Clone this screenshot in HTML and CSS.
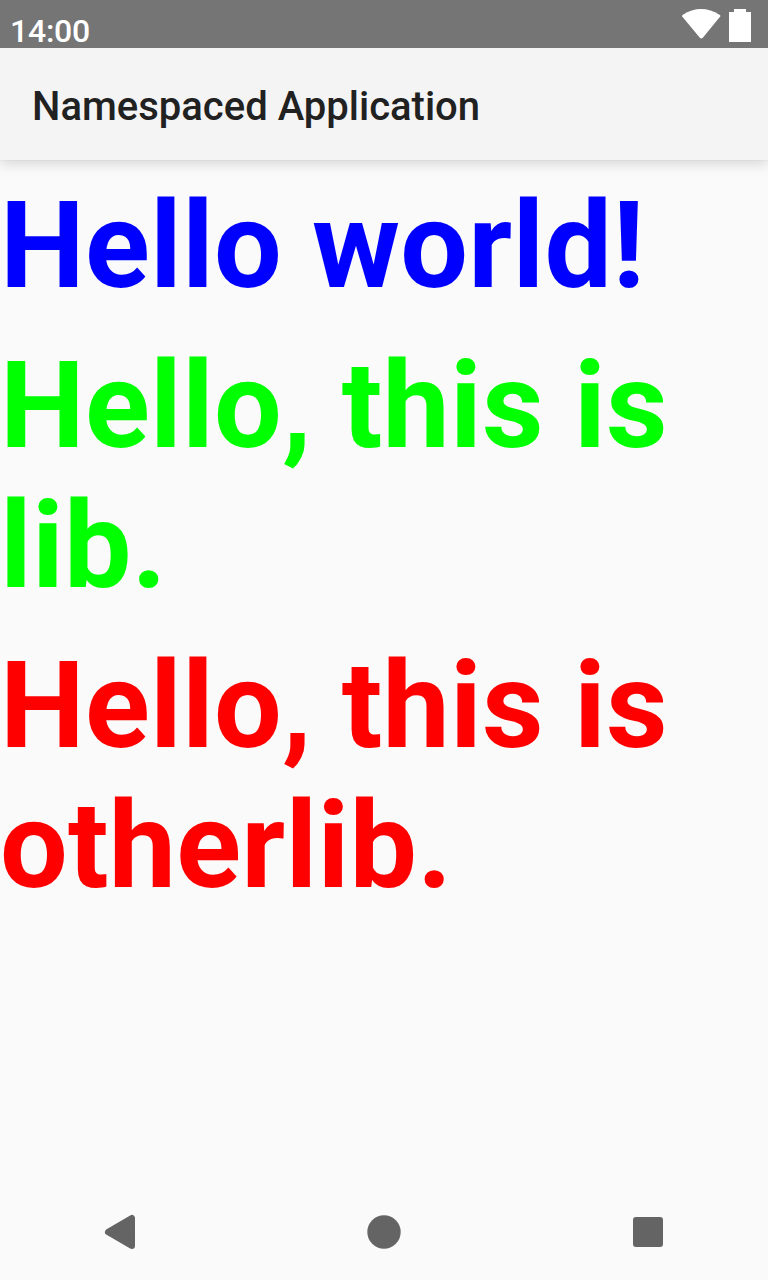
FILE: index.html
```html
<!DOCTYPE html>
<html lang="en">
<head>
<meta charset="utf-8">
<title>Namespaced Application</title>
<link rel="stylesheet" href="styles.css">
</head>
<body>
<div class="status-bar">
  <span class="clock">14:00</span>
  <svg class="wifi" width="40" height="32" viewBox="0 0 40 32"><path d="M1.2 8.6Q0.6 7.6 1.6 6.9Q20-4.9 38.8 6.9Q39.8 7.6 39.2 8.6L21.8 29.8Q20.3 31.2 18.8 29.8Z" fill="#fff"/></svg>
  <svg class="battery" width="22" height="34" viewBox="0 0 22 34"><path d="M5 1H17V4H22V34H0V4H5Z" fill="#fff"/></svg>
</div>
<header class="app-bar"><h1 class="title">Namespaced Application</h1></header>
<main class="content">
  <p class="message blue">Hello world!</p>
  <p class="message green">Hello, this is lib.</p>
  <p class="message red">Hello, this is otherlib.</p>
</main>
<nav class="nav-bar">
  <svg width="60" height="60" viewBox="0 0 60 60"><path d="M18.2 32L41.8 18.2V45.8Z" fill="#646464" stroke="#646464" stroke-width="6.4" stroke-linejoin="round"/></svg>
  <svg width="60" height="60" viewBox="0 0 60 60"><circle cx="30" cy="32" r="16.7" fill="#646464"/></svg>
  <svg width="60" height="60" viewBox="0 0 60 60"><rect x="15" y="17" width="30" height="30" rx="3" fill="#646464"/></svg>
</nav>
</body>
</html>
```
FILE: styles.css
```css
body { margin: 0; height: 1280px; display: flex; flex-direction: column; background: #fafafa; font-family: Roboto, sans-serif; overflow: hidden; }
.status-bar { height: 48px; flex: none; box-sizing: border-box; display: flex; align-items: flex-start; padding: 8px 17px 0 10px; background: #757575; color: #fff; position: relative; z-index: 1; }
.clock { font-size: 32px; font-weight: 500; letter-spacing: -0.25px; line-height: 47px; margin-right: auto; }
.wifi { margin-right: 8px; }
.app-bar { height: 112px; flex: none; box-sizing: border-box; padding: 35px 32px 0; background: #f4f4f4; box-shadow: 0 0 1px rgba(0,0,0,.12), 0 4px 12px rgba(0,0,0,.14); }
.title { margin: 0; font-size: 40px; font-weight: 500; line-height: 47px; color: #212121; }
.content { flex: 1; padding-top: 6px; }
.message { margin: 0; padding: 10px 0; font-size: 120px; font-weight: 700; line-height: 140px; letter-spacing: 0.23px; }
.blue { color: #00f; }
.green { color: #0f0; }
.red { color: #f00; }
.nav-bar { height: 80px; flex: none; display: flex; justify-content: space-between; padding: 0 90px; }
```
